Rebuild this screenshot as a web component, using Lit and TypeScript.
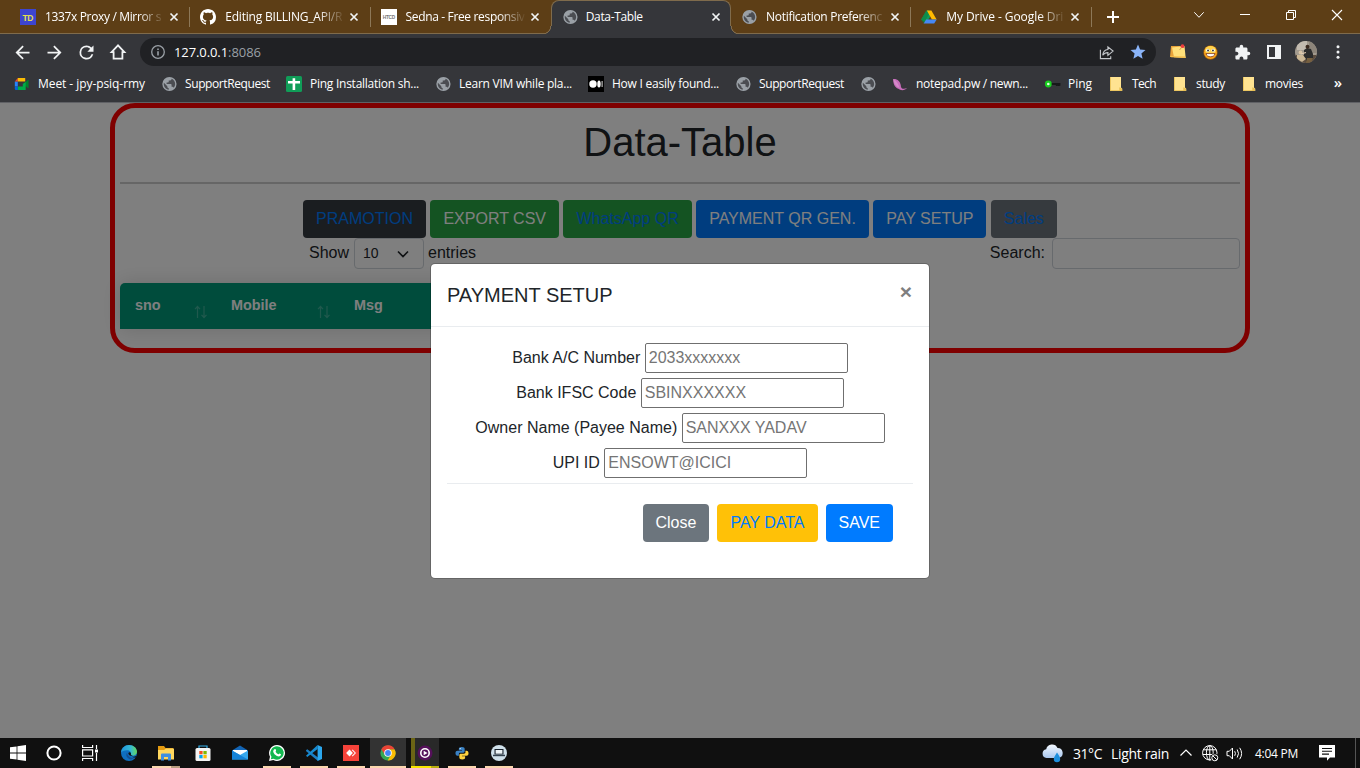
import { LitElement, html, css, svg, nothing } from "lit";
import { customElement, property } from "lit/decorators.js";
import { classMap } from "lit/directives/class-map.js";

const earth = "M12 2a10 10 0 1 0 0 20 10 10 0 0 0 0-20zm-1 17.93c-3.95-.49-7-3.85-7-7.93 0-.62.08-1.21.21-1.79L9 15v1c0 1.1.9 2 2 2v1.93zm6.9-2.54c-.26-.81-1-1.39-1.9-1.39h-1v-3c0-.55-.45-1-1-1H8v-2h2c.55 0 1-.45 1-1V7h2c1.1 0 2-.9 2-2v-.41c2.93 1.19 5 4.06 5 7.41 0 2.08-.8 3.97-2.1 5.39z";

const icons: Record<string, { box: string; body: unknown }> = {
  back: { box: "0 0 24 24", body: svg`<path fill="#f1f3f4" d="M20 11H7.83l5.59-5.59L12 4l-8 8 8 8 1.41-1.41L7.83 13H20v-2z"/>` },
  forward: { box: "0 0 24 24", body: svg`<path fill="#f1f3f4" d="M12 4l-1.41 1.41L16.17 11H4v2h12.17l-5.58 5.59L12 20l8-8z"/>` },
  reload: { box: "0 0 24 24", body: svg`<path fill="#f1f3f4" d="M17.65 6.35A7.958 7.958 0 0 0 12 4a8 8 0 1 0 7.73 10h-2.08A6 6 0 1 1 12 6c1.66 0 3.14.69 4.22 1.78L13 11h7V4l-2.35 2.35z"/>` },
  home: { box: "0 0 16 16", body: svg`<path fill="none" stroke="#f1f3f4" stroke-width="1.8" d="M8 1.3 1.6 8.1h2v6.6h8.8V8.1h2z"/>` },
  info: { box: "0 0 16 16", body: svg`<circle cx="8" cy="8" r="6.3" fill="none" stroke="#9aa0a6" stroke-width="1.3"/><path fill="#9aa0a6" d="M7.2 7.2h1.6v4.2H7.2zM7.2 4.5h1.6v1.6H7.2z"/>` },
  share: { box: "0 0 16 16", body: svg`<path fill="none" stroke="#c5c8cc" stroke-width="1.2" d="M1.500 5v9.500h11V12M9.500 2v2.800C6 5 4.300 7.500 4 11c1.300-2 3-2.900 5.500-2.900V11L15 6.500z"/>` },
  star: { box: "0 0 24 24", body: svg`<path fill="#8ab4f8" d="M12 17.27 18.18 21l-1.64-7.03L22 9.240l-7.190-.61L12 2 9.190 8.630 2 9.240l5.460 4.730L5.820 21z"/>` },
  note: { box: "0 0 16 16", body: svg`<path fill="#e8a33a" d="M1 2h10v11H0z"/><path fill="#ffe07a" d="M2 3.500 14.500 2l1.200 12L4 13.200z"/><path fill="#f5bd4a" d="M0 12l15.500.5.200 1.500L1 13.300z"/><circle cx="12.500" cy="2.200" r="1.900" fill="#ee3d3d"/><path stroke="#c58a4a" stroke-width=".8" d="m11.500 3.500-2 2.500"/>` },
  smile: { box: "1 1 14 14", body: svg`<circle cx="8" cy="8" r="6.500" fill="#f9a51c" stroke="#6b3a0c" stroke-width=".6"/><ellipse cx="8" cy="6" rx="5.200" ry="4" fill="#ffd34d"/><circle cx="5.500" cy="6" r="1.600" fill="#fff"/><circle cx="10.500" cy="6" r="1.600" fill="#fff"/><circle cx="5.700" cy="6.200" r=".9" fill="#333"/><circle cx="10.300" cy="6.200" r=".9" fill="#333"/><path fill="#fff" stroke="#7a2f0e" stroke-width=".7" d="M3.800 9h8.400c-.5 4-7.900 4-8.400 0z"/>` },
  puzzle: { box: "0 0 24 24", body: svg`<path fill="#f1f3f4" d="M20.500 11H19V7c0-1.100-.9-2-2-2h-4V3.500a2.500 2.500 0 0 0-5 0V5H4c-1.100 0-2 .9-2 2v3.800h1.500c1.490 0 2.700 1.210 2.700 2.700s-1.210 2.700-2.700 2.700H2V20c0 1.100.9 2 2 2h3.800v-1.500c0-1.490 1.210-2.700 2.700-2.700s2.700 1.210 2.700 2.700V22H17c1.100 0 2-.9 2-2v-4h1.500a2.500 2.500 0 0 0 0-5z"/>` },
  panel: { box: "0 0 14 14", body: svg`<path fill="#f1f3f4" fill-rule="evenodd" d="M0 0h14v14H0zM2 2v10h6V2z"/>` },
  avatar: { box: "0 0 22 22", body: svg`<defs><clipPath id="av"><circle cx="11" cy="11" r="11"/></clipPath></defs><g clip-path="url(#av)"><path fill="#a29a8e" d="M0 0h22v22H0z"/><path fill="#c2bbb0" d="M2 0h10v9H2z"/><path fill="#8d857a" d="M14 0h8v12h-8z"/><path fill="#5b4c3e" d="M0 14h22v8H0z"/><path fill="#2c2c2c" d="M9 9l3-2 4 1 2 5v5l-6 2-3-3z"/><circle cx="12.500" cy="5.800" r="2" fill="#3a2a20"/><circle cx="5.500" cy="11.500" r="1.900" fill="#d7c3a6"/><path fill="#cbb795" d="M2 14h6l3 4-4 3-5-3z"/><path stroke="#e5cfb4" stroke-width="1.100" d="m6 13 5-1.500"/><path fill="#77603f" d="M12 17h6l-2 5h-5z"/></g>` },
  dots: { box: "0 0 16 16", body: svg`<g fill="#f1f3f4"><circle cx="8" cy="2.700" r="1.500"/><circle cx="8" cy="8" r="1.500"/><circle cx="8" cy="13.300" r="1.500"/></g>` },
  plus: { box: "0 0 12 12", body: svg`<path stroke="#fff" stroke-width="2" d="M6 0v12M0 6h12"/>` },
  cross: { box: "0 0 8 8", body: svg`<path stroke="#f1f3f4" stroke-width="1.700" d="m.5.5 7 7m0-7-7 7"/>` },
  chevron: { box: "0 0 10 10", body: svg`<path fill="none" stroke="#fff" stroke-width="1" d="m.3 2.300 4.700 5 4.700-5"/>` },
  minimize: { box: "0 0 10 10", body: svg`<path stroke="#fff" d="M0 4.500h10"/>` },
  restore: { box: "0 0 10 10", body: svg`<path fill="none" stroke="#fff" d="M.5 2.500h7v7h-7zM2.500 2.500v-2h7v7h-2"/>` },
  close: { box: "0 0 10 10", body: svg`<path stroke="#fff" stroke-width="1.100" d="m0 0 10 10m0-10L0 10"/>` },
  td: { box: "0 0 16 16", body: svg`<path fill="#3d45d0" d="M0 0h16v16H0z"/><text x="8" y="11.500" text-anchor="middle" font-family="Liberation Sans, sans-serif" font-weight="700" font-size="8.500" textLength="11" fill="#e3e04e">TD</text>` },
  github: { box: "0 0 16 16", body: svg`<path fill="#fff" d="M8 0C3.580 0 0 3.580 0 8c0 3.540 2.290 6.530 5.470 7.590.4.070.55-.17.55-.38 0-.19-.01-.82-.01-1.490-2.010.37-2.530-.49-2.690-.94-.09-.23-.48-.94-.82-1.130-.28-.15-.68-.52-.01-.53.63-.01 1.080.58 1.230.82.72 1.210 1.870.87 2.330.66.07-.52.28-.87.51-1.070-1.780-.2-3.640-.89-3.640-3.950 0-.87.31-1.590.82-2.150-.08-.2-.36-1.020.08-2.120 0 0 .67-.21 2.200.82.64-.18 1.320-.27 2-.27s1.360.09 2 .27c1.530-1.040 2.200-.82 2.200-.82.44 1.100.16 1.920.08 2.120.51.56.82 1.270.82 2.150 0 3.070-1.870 3.750-3.650 3.950.29.25.54.73.54 1.480 0 1.070-.01 1.930-.01 2.200 0 .21.15.46.55.38A8.010 8.010 0 0 0 16 8c0-4.420-3.580-8-8-8z"/>` },
  htcd: { box: "0 0 16 16", body: svg`<path fill="#fff" d="M0 0h16v16H0z"/><text x="8" y="9.800" text-anchor="middle" font-family="Liberation Sans, sans-serif" font-weight="700" font-size="4.800" textLength="12.500" fill="#777">HTCD</text>` },
  earth: { box: "2.500 3 18 18", body: svg`<circle cx="12" cy="12" r="7.600" fill="#4b4d52"/><path fill="#9aa0a6" transform="translate(12 12) scale(.8) translate(-12 -12)" d=${earth}/>` },
  drive: { box: "0 0 16 16", body: svg`<path fill="#0f9d58" d="M5.400 1.500h2.600l2.400 4.200L5.300 14 0 10.800z"/><path fill="#ffba00" d="M5.800 1.500h4.600L15.600 10.500h-4.700z"/><path fill="#4688f4" d="M5 10.500h10.700L13.200 14.500H2.600z"/><path fill="#0b8043" d="M5.500 1.500 7.800 5.600 2.600 14.500.2 10.500z" opacity=".6"/>` },
  meet: { box: "0 0 16 16", body: svg`<path fill="#2684fc" d="M.8 5.500h3v5h-3z"/><path fill="#ea4335" d="M3.800 2v3.500h-3z"/><path fill="#fbbc04" d="M3.800 2h7.400v3.500H3.800z"/><path fill="#00832d" d="m9 8 5.500-4.500v9z"/><path fill="#00ac47" d="M3.800 10.500h5V8l2.900-2v8H3.800z"/><path fill="#0066da" d="M.8 10.500h3V14H2Q.8 14 .8 12.800z"/>` },
  sheets: { box: "0 0 16 16", body: svg`<rect width="16" height="16" rx="1.500" fill="#109d58"/><path fill="#fff" d="M2 5h12v2.400H9.200V14H6.600V7.400H2zM6.600 2.200h2.600V5H6.600z"/>` },
  medium: { box: "0 0 16 16", body: svg`<path d="M0 0h16v16H0z"/><circle cx="5" cy="8" r="3.700" fill="#fff"/><ellipse cx="11" cy="8" rx="1.700" ry="3.500" fill="#fff"/><path fill="#ddd" d="M13.600 5h1v6h-1z"/>` },
  feather: { box: "0 0 16 16", body: svg`<path fill="#c86dbb" d="M1.200 3c4-.3 7.500 2 7.800 8 .6 2.200 3.500 2 6 1.300-2 2.200-6.500 2.500-8.600.5C2.500 11.500 1 7 1.200 3z"/><path fill="#e3a5da" d="M1.200 3c3.200 1.500 5.200 4.500 6.300 9-4-1.700-6-5-6.300-9z" opacity=".5"/>` },
  key: { box: "0 0 16 16", body: svg`<path stroke="#17181a" stroke-width="1.800" d="M6 8h9.500v1.800M12.800 8v2"/><circle cx="4.300" cy="8" r="3.400" fill="#19d01f"/><circle cx="4.300" cy="8" r="1.300" fill="#e8ffe8"/>` },
  folder: { box: "0 0 16 16", body: svg`<path fill="#ffe391" d="M2 1h11v10.500l1.300 1.300V15H2z"/><path fill="#e8bf53" d="M11.300 11.300 14 12.500V15h-2.700zM2 14.200h10V15H2zM2 1h.8v14H2z"/>` },
  windows: { box: "0 0 16 16", body: svg`<path fill="#fff" d="M0 2.300 6.600 1.400v6.200H0zM7.400 1.250 16 0v7.600H7.400zM0 8.400h6.600v6.200L0 13.700zM7.400 8.400H16V16l-8.600-1.250z"/>` },
  cortana: { box: "0 0 16 16", body: svg`<circle cx="8" cy="8" r="6.600" fill="none" stroke="#fff" stroke-width="2"/>` },
  taskview: { box: "0 0 16 16", body: svg`<path fill="none" stroke="#fff" stroke-width="1.200" d="M.6 0v2.500h10V0M.6 16v-2.500h10V16M.6 4.800h10v6.200H.6zM14.500 0v4m0 4v8"/><path fill="#fff" d="M13 4.500h3v3h-3z"/>` },
  edge: { box: "0 0 16 16", body: svg`<defs><linearGradient id="eg" x2="1"><stop stop-color="#2094dd"/><stop offset=".6" stop-color="#35b9d2"/><stop offset="1" stop-color="#66d95a"/></linearGradient></defs><circle cx="8" cy="8" r="8" fill="#0f6fc0"/><path fill="url(#eg)" d="M0 7.500C.3 3.300 3.800 0 8 0c4.600 0 8 3.200 8 6.800 0 2.300-1.700 3.900-4 3.900-1.600 0-2.500-.6-2.100-1.400C10.500 7 9 5.200 6 5.200 3 5.200.6 6.300 0 7.500z"/><path fill="#144f94" d="M6 7.500c-1.800 3 .2 6.500 4 7l4.800-2.300c-3.500 1.700-8 .4-8.800-4.700z"/><path fill="#111" d="M7.300 8.200c.4-1.200 2.300-1.200 2.600.1-.2 1.300.3 2.200 2 2.600C9.500 11.200 7.300 10 7.300 8.200zM15.500 10.800l-.8 1.700c-1.500.3-3-.1-3.800-1 1.600.4 3.300.1 4.600-.7z"/>` },
  explorer: { box: "0 0 16 16", body: svg`<path fill="#e59b10" d="M0 1h6l1.500 2H15v4H0z"/><path fill="#ffd75e" d="M0 5h6l2-1.500h8V14.500H0z"/><path fill="#3f8fe0" d="M3 15.500V9.500Q3 8.500 4 8.500h8q1 0 1 1v6h-3V12H6v3.500z"/>` },
  store: { box: "0 0 16 16", body: svg`<path fill="none" stroke="#35b0ea" stroke-width="1.200" d="M4 4V1h8v3"/><rect x=".5" y="3" width="15" height="13" rx="1.500" fill="#f4f4f4"/><path fill="#f25022" d="M4.300 6h3.300v3.300H4.300z"/><path fill="#7fba00" d="M8.400 6h3.300v3.300H8.400z"/><path fill="#00a4ef" d="M4.300 10h3.300v3.300H4.300z"/><path fill="#ffb900" d="M8.400 10h3.300v3.300H8.400z"/>` },
  mail: { box: "0 0 16 16", body: svg`<path fill="#1264b4" d="M0 5.500 8 .5l8 5V9H0z"/><path fill="#fff" d="M1 5h14v5H1z"/><path fill="#37a8ec" d="M0 5.500 8 10l8-4.500V14.500H0z"/><path fill="#1583d8" d="m0 5.500 16 9H0z"/>` },
  whatsapp: { box: "0 0 16 16", body: svg`<path fill="#fff" d="M8 0a8 8 0 1 1-3.700 15.100L0 16l1-4.200A8 8 0 0 1 8 0z"/><path fill="#12b84f" d="M8 1.300a6.700 6.700 0 1 1-3.500 12.400l-2.700.6.700-2.500A6.700 6.700 0 0 1 8 1.300z"/><path fill="#fff" d="M5.500 4.200c.8-.4 1.100-.1 1.600 1.300.2.500-.6 1-.5 1.300.6 1.300 1.500 2 2.700 2.500.4.100.9-1 1.300-.8 1.500.7 1.500.8 1.300 1.600-.6 1.600-2.600 1.500-4 .8C5.900 9.900 4.700 8.500 4.300 7c-.3-1.200.2-2.200 1.200-2.800z"/>` },
  vscode: { box: "0 0 16 16", body: svg`<path fill="#1b7fc4" d="M0 5.300 1.300 4.200 12 12.500V16L.2 6.300z"/><path fill="#168bd2" d="M0 10.800 11.600 0v4L1.300 12z"/><path fill="#2ba7ed" d="m11.600 0 4.400 2v12l-4.400 2z"/>` },
  anydesk: { box: "0 0 16 16", body: svg`<path fill="#f6433a" d="M0 0h16v16H0z"/><path fill="#fff" d="m6.500 4.600 3.400 3.400-3.400 3.400L3.100 8z"/><path fill="#fff" d="m8.900 5.200.7-.6L13 8l-3.400 3.400-.7-.6L11.700 8z"/>` },
  chrome: { box: "0 0 16 16", body: svg`<circle cx="8" cy="8" r="7.600" fill="#34a853"/><path fill="#ea4335" d="M1.300 4.300A7.600 7.600 0 0 1 14.700 4.400H8L4.900 9.700z"/><path fill="#fbbc04" d="M8 4.400h6.700A7.600 7.600 0 0 1 7.600 15.600l3.500-5.800z"/><circle cx="8" cy="8" r="3.800" fill="#fff"/><circle cx="8" cy="8" r="2.900" fill="#4285f4"/>` },
  player: { box: "0 0 16 16", body: svg`<circle cx="8" cy="8" r="7.500" fill="#55105a"/><circle cx="8" cy="8" r="4.200" fill="none" stroke="#fff" stroke-width="1.600"/><path fill="#fff" d="m6.700 5.700 3.800 2.300-3.800 2.300z"/>` },
  python: { box: "1 1 14.500 14.500", body: svg`<path fill="#3b82c4" d="M8 2c-2.200 0-3 .8-3 2v1.300h3.300V6H3.500C2 6 1.500 7 1.500 8.500S2.200 11 3.500 11H5V9.500C5 8.500 5.700 8 6.500 8h3c1 0 1.500-.6 1.500-1.500V4c0-1.300-.9-2-3-2z"/><path fill="#ffd33f" d="M8.500 15c2.200 0 3-.8 3-2v-1.300H8.200V11H13c1.500 0 2-1 2-2.500S14.300 6 13 6h-1.200v1.500c0 1-.6 1.500-1.500 1.500H7c-1 0-1.500.6-1.500 1.500V13c0 1.300.9 2 3 2z"/><circle cx="6.400" cy="3.700" r=".6" fill="#fff"/>` },
  disc: { box: "0 0 16 16", body: svg`<circle cx="8" cy="8" r="8" fill="#cfe0ea"/><path fill="#17212b" d="M3.500 4h9v5.500h-9z"/><path fill="#eef4f7" d="M4.600 5h6.800v3.700H4.600z"/><path fill="#33414d" d="M2 9.700h12v1.500H2z"/>` },
  weather: { box: "0 0 22 20", body: svg`<defs><linearGradient id="cl" y2="1" x2="0"><stop stop-color="#f4f9ff"/><stop offset="1" stop-color="#a9c7ef"/></linearGradient></defs><path fill="url(#cl)" d="M4.500 15a4.400 4.400 0 0 1-.3-8.700A6 6 0 0 1 15.500 5 5.100 5.100 0 0 1 17 15z"/><path fill="#1d8fdd" d="M15 9.500c2 2.900 3.200 4.700 3.200 6.500a3.200 3.200 0 0 1-6.400 0c0-1.800 1.500-3.600 3.200-6.500z"/>` },
  up: { box: "0 0 12 12", body: svg`<path fill="none" stroke="#fff" stroke-width="1.200" d="m.5 8.500L6 3l5.500 5.500"/>` },
  network: { box: "0 0 17 17", body: svg`<g fill="none" stroke="#fff"><circle cx="7.800" cy="7.800" r="7.200"/><ellipse cx="7.800" cy="7.800" rx="3.400" ry="7.200"/><path d="M1.400 4.800h12.800M.8 9.500h14M7.800.8v14"/></g><circle cx="12.800" cy="12.800" r="4.200" fill="#101010"/><circle cx="12.800" cy="12.800" r="3" fill="none" stroke="#fff"/><path stroke="#fff" d="m10.800 10.800 4 4"/>` },
  speaker: { box: "0 0 17 16", body: svg`<path fill="none" stroke="#fff" d="M1 5.800h2.300L6.500 2.500v11L3.300 10.200H1zM8.700 5.700q1.500 2.300 0 4.600M11.200 4q2.600 4 0 8M13.700 2.300q3.800 5.700 0 11.400"/>` },
  notice: { box: "0 0 16 16", body: svg`<path fill="#fff" d="M0 0h16v12.500h-5L8 15.800V12.500H0z"/><path stroke="#111" stroke-width="1.100" d="M3 3.500h10M3 6.300h10M3 9.100h7"/>` },
  caret: { box: "0 0 12 12", body: svg`<path fill="none" stroke="#212529" stroke-width="1.700" d="m1 3.500 5 5 5-5"/>` },
  sort: { box: "0 0 14 14", body: svg`<path fill="none" stroke="#fff" stroke-width="1.200" d="M3.500 13V2M1 4.200 3.500 1.500 6 4.200M10 1v11M7.500 9.800l2.500 2.700 2.500-2.700"/>` },
};

@customElement("ui-icon")
class UiIcon extends LitElement {
  @property() name = "";
  @property({ type: Number }) size = 16;
  static styles = css`
    :host { display: inline-flex; flex: none; }
    svg { display: block; overflow: visible; }
  `;
  render() {
    const icon = icons[this.name];
    return html`<svg width=${this.size} height=${this.size} viewBox=${icon.box}>${icon.body}</svg>`;
  }
}

/* One line of text whose tracking is adjusted to fill a given width. */
@customElement("fit-text")
class FitText extends LitElement {
  @property() text = "";
  @property({ type: Number }) width = 0;
  static styles = css`
    :host { display: inline-block; flex: none; white-space: pre; }
    .run { display: inline-block; }
  `;
  firstUpdated() {
    const run = this.renderRoot.querySelector<HTMLElement>(".run")!;
    const natural = run.getBoundingClientRect().width;
    run.style.letterSpacing = `${(this.width - natural) / this.text.length}px`;
  }
  render() {
    return html`<span class="run">${this.text}</span>`;
  }
}

const tabs = [
  { icon: "td", title: "1337x Proxy / Mirror s", width: 116, cut: true },
  { icon: "github", title: "Editing BILLING_API/R", width: 117, cut: true },
  { icon: "htcd", title: "Sedna - Free responsiv", width: 119, cut: true },
  { icon: "earth", title: "Data-Table", width: 57, active: true },
  { icon: "earth", title: "Notification Preferenc", width: 116, cut: true },
  { icon: "drive", title: "My Drive - Google Dri", width: 117, cut: true },
];

const bookmarks: [string, string, number][] = [
  ["meet", "Meet - jpy-psiq-rmy", 107],
  ["earth", "SupportRequest", 85],
  ["sheets", "Ping Installation sh...", 109],
  ["earth", "Learn VIM while pla...", 113],
  ["medium", "How I easily found...", 107],
  ["earth", "SupportRequest", 85],
  ["earth", "", 0],
  ["feather", "notepad.pw / newn...", 112],
  ["key", "Ping", 24],
  ["folder", "Tech", 24],
  ["folder", "study", 29],
  ["folder", "movies", 38],
];

const actions: [string, string][] = [
  ["PRAMOTION", "dark link"],
  ["EXPORT CSV", "success"],
  ["WhatsApp QR", "success link"],
  ["PAYMENT QR GEN.", "primary"],
  ["PAY SETUP", "primary"],
  ["Sales", "secondary link"],
];

const fields: [string, string][] = [
  ["Bank A/C Number", "2033xxxxxxx"],
  ["Bank IFSC Code", "SBINXXXXXX"],
  ["Owner Name (Payee Name)", "SANXXX YADAV"],
  ["UPI ID", "ENSOWT@ICICI"],
];

const apps: { icon: string; size: number; state: string }[] = [
  { icon: "edge", size: 16, state: "" },
  { icon: "explorer", size: 16, state: "open stacked" },
  { icon: "store", size: 16, state: "" },
  { icon: "mail", size: 16, state: "" },
  { icon: "whatsapp", size: 16, state: "open" },
  { icon: "vscode", size: 16, state: "open" },
  { icon: "anydesk", size: 16, state: "open" },
  { icon: "chrome", size: 16, state: "open focus" },
  { icon: "player", size: 16, state: "busy" },
  { icon: "python", size: 14, state: "open" },
  { icon: "disc", size: 16, state: "open" },
];

@customElement("app-root")
class AppRoot extends LitElement {
  static styles = css`
    :host { display: flex; flex-direction: column; width: 1360px; height: 768px; overflow: hidden; font-family: "Liberation Sans", Arial, sans-serif; }
    * { box-sizing: border-box; }

    .tabs { display: flex; height: 34px; flex: none; background: #5d3e16; padding-left: 10px; color: #fff; font: 12px/34px "Open Sans", "Noto Sans", sans-serif; box-shadow: inset 0 -1px #7f6b4c; }
    .tab { display: flex; align-items: center; width: 180.250px; height: 34px; padding-left: 10px; position: relative; }
    .tab::after { content: ""; position: absolute; right: 0; top: 7px; width: 1px; height: 20px; background: #8d7858; }
    .tab.before::after { display: none; }
    .tab.active { background: #35363a; border: 1px solid #7f6b4c; border-bottom: 0; border-radius: 8px 8px 0 0; padding-left: 10px; padding-bottom: 1px; }
    .tab.active::before, .tab.active::after { content: ""; position: absolute; top: auto; bottom: 0; width: 9px; height: 8px; z-index: 1; }
    .tab.active::before { left: -9px; background: radial-gradient(circle at 0 0, #5d3e16 7px, #7f6b4c 7.500px, #7f6b4c 8px, #35363a 8.500px); }
    .tab.active::after { right: -9px; background: radial-gradient(circle at 100% 0, #5d3e16 7px, #7f6b4c 7.500px, #7f6b4c 8px, #35363a 8.500px); }
    .title { width: 121px; margin-left: 9px; overflow: hidden; height: 34px; }
    .active .title { margin-left: 8px; width: 122px; }
    .title.cut { -webkit-mask-image: linear-gradient(90deg, #000 93px, transparent 120px); mask-image: linear-gradient(90deg, #000 93px, transparent 120px); }
    .tab .x { margin-left: 4px; }
    .plus { display: flex; align-items: center; margin-left: 15.500px; }
    .window { display: flex; margin-left: auto; height: 29px; }
    .window .cell { width: 46px; display: flex; align-items: center; justify-content: center; }

    .toolbar { display: flex; height: 36px; flex: none; background: #35363a; padding: 4px 6px 4px; }
    .slot { width: 32px; display: flex; align-items: center; justify-content: center; }
    .omnibox { display: flex; align-items: center; width: 1016px; height: 28px; margin: 0 6px; border-radius: 14px; background: #202124; padding: 0 2px 0 10px; color: #fff; font: 14px/28px "Open Sans", "Noto Sans", sans-serif; }
    .omnibox .host { margin-left: 8px; font-size: 13px; }
    .omnibox .port { color: #9aa0a6; font-size: 13px; }
    .omnibox .grow { flex: 1; }

    .bookmarks { display: flex; align-items: center; height: 33px; flex: none; background: #35363a; border-bottom: 1px solid #606165; padding: 0 18px 4px 14px; gap: 16px; color: #fff; font: 12px/28px "Open Sans", "Noto Sans", sans-serif; }
    .bookmark { display: flex; align-items: center; gap: 8px; }
    .bookmark .ico { width: 16px; display: flex; justify-content: center; }
    .more { margin-left: auto; font-size: 15px; font-weight: 600; line-height: 24px; height: 28px; }

    .page { position: relative; flex: 1; background: #fff; color: #212529; font-size: 16px; line-height: 24px; overflow: hidden; }
    .card { width: 1140px; height: 250px; margin: 0 auto; border: 5px solid #f00; border-radius: 25px; padding: 10px 5px 0; }
    h1 { margin: 0; text-align: center; font-size: 40px; line-height: 48px; font-weight: 400; }
    .rule { height: 2px; background: #ccc; margin: 16px 0; }
    .actions { display: flex; justify-content: center; gap: 4.450px; }
    .btn { height: 38px; border: 0; border-radius: 4px; padding: 0 13px; font: 16px/36px "Liberation Sans", Arial, sans-serif; color: #fff; flex: none; white-space: nowrap; }
    .dark { background: #343a40; }
    .success { background: #28a745; }
    .primary { background: #007bff; }
    .secondary { background: #6c757d; }
    .warning { background: #ffc107; }
    .link { color: #007bff; }
    .controls { display: flex; justify-content: space-between; padding-left: 189px; height: 31px; line-height: 29px; }
    .group { display: flex; }
    .select { display: flex; align-items: center; justify-content: space-between; width: 70px; height: 31px; margin: 0 4px 0 5px; border: 1px solid #ced4da; border-radius: 4px; padding: 0 14px 0 8px; font-size: 14px; }
    .search { width: 188px; height: 31px; margin-left: 7px; border: 1px solid #ced4da; border-radius: 4px; background: transparent; }
    .table { display: grid; grid-template-columns: 96px 123px 1fr; width: 700px; height: 46px; margin-top: 14px; border-radius: 5px 5px 0 0; background: #009879; color: #fff; box-shadow: 0 0 20px rgba(0, 0, 0, 0.15); font-size: 14.400px; font-weight: 700; }
    .th { display: flex; justify-content: space-between; padding: 11px 8px 0 15px; line-height: 22px; }
    .th ui-icon { margin-top: 11px; opacity: 0.25; }

    .backdrop { position: absolute; inset: 0; background: rgba(0, 0, 0, 0.5); }
    .modal { position: absolute; left: 430px; top: 160px; width: 500px; height: 316px; background: #fff; background-clip: padding-box; border: 1px solid rgba(0, 0, 0, 0.2); border-radius: 5px; }
    .head { display: flex; justify-content: space-between; height: 63px; border-bottom: 1px solid #e9ecef; padding: 16px; font-size: 20px; line-height: 30px; }
    .dismiss { font-size: 21px; line-height: 23px; font-weight: 700; color: #7f7f7f; width: 14px; text-align: center; }
    .body { padding: 16px; }
    .fields { display: flex; flex-direction: column; gap: 5px; padding-bottom: 5px; }
    .field { display: flex; justify-content: center; gap: 4.450px; height: 30px; line-height: 30px; }
    .field input { width: 203px; height: 30px; margin: 0; border: 1px solid #6f6f6f; border-radius: 2px; padding: 0 3px; font: 16px "Liberation Sans", Arial, sans-serif; }
    .field input::placeholder { color: #757575; }
    .foot { display: flex; justify-content: flex-end; gap: 8px; border-top: 1px solid #e9ecef; padding: 20px 20px 0; }

    .taskbar { display: flex; height: 30px; flex: none; background: #101010; color: #fff; font-family: "Open Sans", "Noto Sans", sans-serif; }
    .sys { display: flex; width: 108px; margin-right: 2px; }
    .sys .cell { width: 36px; display: flex; align-items: center; justify-content: center; }
    .app { width: 37px; display: flex; align-items: center; justify-content: center; }
    .app .in { width: 28px; height: 30px; display: flex; align-items: center; justify-content: center; }
    .open .in { background: linear-gradient(#fbd7ae, #fbd7ae) 0 100% / 100% 2px no-repeat; }
    .stacked .in { background: linear-gradient(90deg, #fbd7ae 19px, #b89d80 19px) 0 100% / 100% 2px no-repeat; }
    .focus .in { width: 36px; background-color: #333; }
    .busy .in { background: linear-gradient(90deg, #f7e600 20px, #b8ad12 20px) 0 100% / 100% 2px no-repeat, linear-gradient(90deg, #6b6415 4px, #292929 4px); }
    .tray { display: flex; align-items: center; margin-left: auto; }
    .temp { font-size: 14px; margin-left: 9px; }
    .cond { font-size: 14px; margin-left: 9px; }
    .up { margin-left: 11px; }
    .net { margin-left: 10px; }
    .vol { margin-left: 7px; }
    .time { font-size: 12px; margin-left: 12px; }
    .note { margin-left: 21px; }
    .edgeline { width: 1px; height: 30px; background: #555; margin: 0 4px 0 20px; }
  `;

  icon(name: string, size = 16, cls = "") {
    return html`<ui-icon class=${cls} name=${name} size=${size}></ui-icon>`;
  }

  render() {
    return html`
      <div class="tabs">
        ${tabs.map((t, i) => html`
          <div class=${classMap({ tab: true, active: !!t.active, before: i === 2 })}>
            ${this.icon(t.icon)}
            <div class=${classMap({ title: true, cut: !!t.cut })}><fit-text .text=${t.title} .width=${t.width}></fit-text></div>
            ${this.icon("cross", 8, "x")}
          </div>`)}
        <div class="plus">${this.icon("plus", 12)}</div>
        <div class="window">
          ${["chevron", "minimize", "restore", "close"].map((n) => html`<div class="cell">${this.icon(n, 10)}</div>`)}
        </div>
      </div>

      <div class="toolbar">
        <div class="slot">${this.icon("back", 21)}</div>
        <div class="slot">${this.icon("forward", 21)}</div>
        <div class="slot">${this.icon("reload", 21)}</div>
        <div class="slot">${this.icon("home", 16)}</div>
        <div class="omnibox">
          ${this.icon("info", 16)}
          <fit-text class="host" .text=${"127.0.0.1"} .width=${54}></fit-text><fit-text class="port" .text=${":8086"} .width=${33}></fit-text>
          <div class="grow"></div>
          <div class="slot">${this.icon("share", 15)}</div>
          <div class="slot">${this.icon("star", 18)}</div>
        </div>
        <div class="slot">${this.icon("note", 16)}</div>
        <div class="slot">${this.icon("smile", 15)}</div>
        <div class="slot">${this.icon("puzzle", 17)}</div>
        <div class="slot">${this.icon("panel", 14)}</div>
        <div class="slot">${this.icon("avatar", 22)}</div>
        <div class="slot">${this.icon("dots", 16)}</div>
      </div>

      <div class="bookmarks">
        ${bookmarks.map(([icon, label, width]) => html`
          <div class="bookmark">
            <span class="ico">${this.icon(icon, 16)}</span>
            ${label ? html`<fit-text .text=${label} .width=${width}></fit-text>` : nothing}
          </div>`)}
        <div class="more">»</div>
      </div>

      <div class="page">
        <div class="card">
          <h1>Data-Table</h1>
          <div class="rule"></div>
          <div class="actions">${actions.map(([label, kind]) => html`<button class="btn ${kind}">${label}</button>`)}</div>
          <div class="controls">
            <div class="group">Show <span class="select">10 ${this.icon("caret", 12)}</span> entries</div>
            <div class="group">Search: <input class="search" /></div>
          </div>
          <div class="table">
            <div class="th">sno ${this.icon("sort", 14)}</div>
            <div class="th">Mobile ${this.icon("sort", 14)}</div>
            <div class="th">Msg</div>
          </div>
        </div>
        <div class="backdrop"></div>
        <div class="modal">
          <div class="head"><span>PAYMENT SETUP</span><span class="dismiss">×</span></div>
          <div class="body">
            <div class="fields">
              ${fields.map(([label, hint]) => html`<label class="field">${label}<input placeholder=${hint} /></label>`)}
            </div>
            <div class="foot">
              <button class="btn secondary">Close</button>
              <button class="btn warning link">PAY DATA</button>
              <button class="btn primary">SAVE</button>
            </div>
          </div>
        </div>
      </div>

      <div class="taskbar">
        <div class="sys">
          ${["windows", "cortana", "taskview"].map((n) => html`<div class="cell">${this.icon(n, 16)}</div>`)}
        </div>
        ${apps.map((a) => html`<div class="app ${a.state}"><div class="in">${this.icon(a.icon, a.size)}</div></div>`)}
        <div class="tray">
          ${this.icon("weather", 22)}
          <fit-text class="temp" .text=${"31°C"} .width=${29}></fit-text>
          <fit-text class="cond" .text=${"Light rain"} .width=${58}></fit-text>
          ${this.icon("up", 12, "up")}
          ${this.icon("network", 17, "net")}
          ${this.icon("speaker", 17, "vol")}
          <fit-text class="time" .text=${"4:04 PM"} .width=${43}></fit-text>
          ${this.icon("notice", 16, "note")}
          <div class="edgeline"></div>
        </div>
      </div>
    `;
  }
}
